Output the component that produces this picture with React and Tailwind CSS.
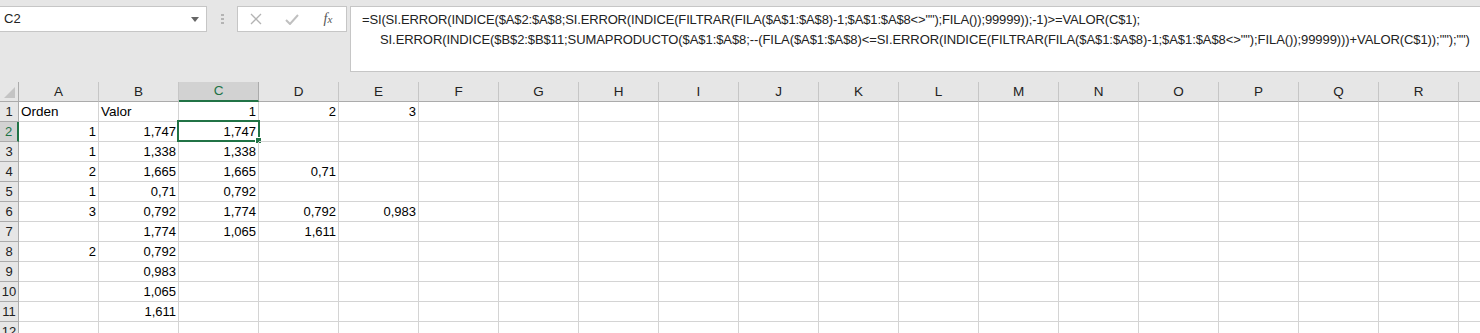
const COLS = ['A','B','C','D','E','F','G','H','I','J','K','L','M','N','O','P','Q','R']

const DATA = [
  ['Orden','Valor','1','2','3'],
  ['1','1,747','1,747'],
  ['1','1,338','1,338'],
  ['2','1,665','1,665','0,71'],
  ['1','0,71','0,792'],
  ['3','0,792','1,774','0,792','0,983'],
  ['','1,774','1,065','1,611'],
  ['2','0,792'],
  ['','0,983'],
  ['','1,065'],
  ['','1,611'],
  [],
]

const LINE1 = '=SI(SI.ERROR(INDICE($A$2:$A$8;SI.ERROR(INDICE(FILTRAR(FILA($A$1:$A$8)-1;$A$1:$A$8<>"");FILA());99999));-1)>=VALOR(C$1);'
const LINE2 = 'SI.ERROR(INDICE($B$2:$B$11;SUMAPRODUCTO($A$1:$A$8;--(FILA($A$1:$A$8)<=SI.ERROR(INDICE(FILTRAR(FILA($A$1:$A$8)-1;$A$1:$A$8<>"");FILA());99999)))+VALOR(C$1));"");"")'

function FormulaBar(){
  return (
    <div className="h-[82px] bg-[#e6e6e6] flex items-start pt-[6px] gap-0">
      <div className="w-[207px] h-[26px] bg-white border border-l-0 border-[#c6c6c6] flex items-center justify-between pl-[4px] pr-[7px] text-[13px] text-[#222]">
        <span>C2</span>
        <svg width="8" height="5" viewBox="0 0 8 5"><path d="M0 0h8L4 5z" fill="#666" /></svg>
      </div>
      <div className="w-[30px] h-[26px] flex items-center justify-center">
        <svg width="3" height="11" viewBox="0 0 3 11"><rect x="0" y="0" width="3" height="2" fill="#b4b4b4"/><rect x="0" y="4" width="3" height="2" fill="#b4b4b4"/><rect x="0" y="8" width="3" height="2" fill="#b4b4b4"/></svg>
      </div>
      <div className="w-[110px] h-[26px] bg-white border border-[#c6c6c6] flex items-center">
        <div className="w-[36px] flex justify-center">
          <svg width="12" height="12" viewBox="0 0 12 12"><path d="M1 1l10 10M11 1L1 11" stroke="#b3b3b3" strokeWidth="1.3" fill="none"/></svg>
        </div>
        <div className="w-[36px] flex justify-center">
          <svg width="14" height="11" viewBox="0 0 14 11"><path d="M1 6l4 4L13 1" stroke="#c0c0c0" strokeWidth="2" fill="none"/></svg>
        </div>
        <div className="w-[36px] flex justify-center font-['Liberation_Serif',serif] italic text-[14px] text-[#555]">
          <span>f<span className="text-[11px]">x</span></span>
        </div>
      </div>
      <div className="ml-[3px] flex-1 h-[66px] bg-white border border-r-0 border-[#c6c6c6] pl-[11px] pt-[3px] text-[13px] leading-[19.5px] tracking-[-0.15px] text-[#222] whitespace-nowrap overflow-hidden">
        <div>{LINE1}</div>
        <div className="pl-[18px] tracking-[-0.08px]">{LINE2}</div>
      </div>
    </div>
  )
}

function HeaderRow(){
  return (
    <div className="flex h-[20px] bg-[#e6e6e6] text-[13.5px]">
      <div className="w-[19px] shrink-0 border-r border-b border-[#ababab] relative">
        <svg className="absolute right-[3px] bottom-[3px]" width="11" height="11" viewBox="0 0 11 11"><path d="M11 0V11H0z" fill="#c4c4c4"/></svg>
      </div>
      {COLS.map(c => c === 'C' ? (
        <div key={c} className="w-[80px] shrink-0 bg-[#d2d2d2] border-r border-[#ababab] border-b-2 border-b-[#217346] flex items-center justify-center text-[#217346]">{c}</div>
      ) : (
        <div key={c} className="w-[80px] shrink-0 border-r border-b border-r-[#c6c6c6] border-b-[#ababab] flex items-center justify-center text-[#222]">{c}</div>
      ))}
      <div className="flex-1 border-b border-[#ababab]"></div>
    </div>
  )
}

function Row({n, cells}){
  const sel = n === 2
  return (
    <div className="flex h-[20px] bg-white">
      {sel ? (
        <div className="w-[19px] shrink-0 bg-[#d2d2d2] border-r-2 border-r-[#217346] border-b border-b-[#ababab] flex items-end justify-center pb-[1px] text-[#217346]">{n}</div>
      ) : (
        <div className="w-[19px] shrink-0 bg-[#e6e6e6] border-r border-b border-[#ababab] flex items-end justify-center pb-[1px] text-[#222]">{n}</div>
      )}
      {COLS.map((c, i) => {
        const v = cells[i] || ''
        const left = n === 1 && i < 2
        return (
          <div key={c} className={`relative w-[80px] shrink-0 border-r border-b border-[#d4d4d4] flex items-end px-[2px] pb-[1px] text-black ${left ? 'justify-start text-[13.5px]' : 'justify-end'}`}>
            {v}
            {sel && c === 'C' && (
              <div className="absolute -left-[2px] -top-[2px] w-[83px] h-[22px] border-2 border-[#217346] pointer-events-none">
                <div className="absolute -right-[4px] -bottom-[4px] w-[7px] h-[7px] bg-[#217346] border border-white"></div>
              </div>
            )}
          </div>
        )
      })}
      <div className="flex-1 border-b border-[#d4d4d4]"></div>
    </div>
  )
}

export default function App(){
  return (
    <div className="w-[1480px] h-[333px] overflow-hidden bg-white font-['Liberation_Sans',Arial,sans-serif] text-[13px] leading-[16px]">
      <FormulaBar />
      <HeaderRow />
      {DATA.map((cells, i) => <Row key={i} n={i + 1} cells={cells} />)}
    </div>
  )
}
